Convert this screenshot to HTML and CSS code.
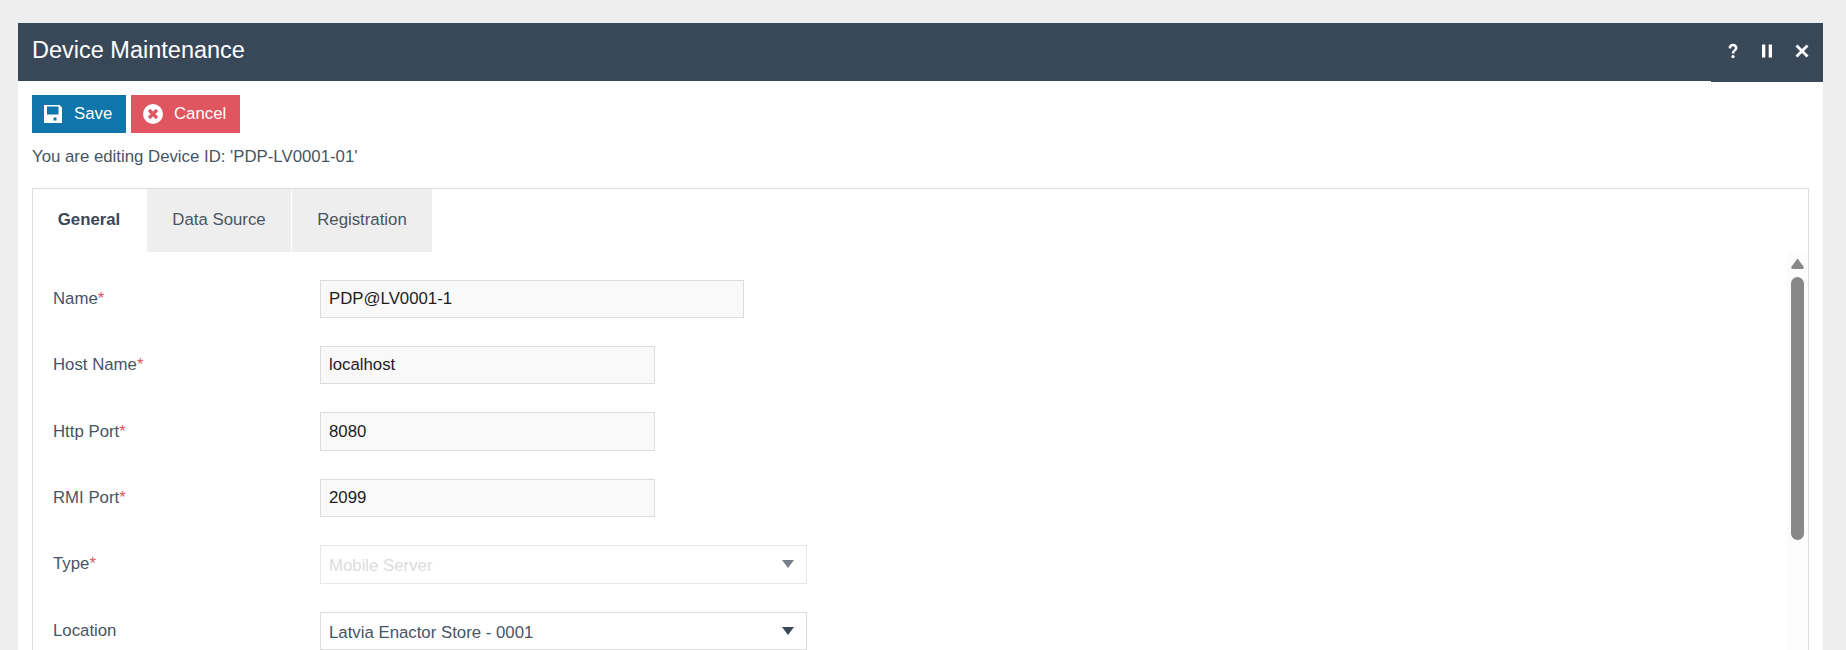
FILE: index.html
```html
<!DOCTYPE html>
<html lang="en">
<head>
<meta charset="utf-8">
<title>Device Maintenance</title>
<link rel="stylesheet" href="styles.css">
</head>
<body>
<main class="modal">
  <header class="modal-header">
    <h1 class="modal-title">Device Maintenance</h1>
    <div class="modal-actions">
      <svg class="action-icon" viewBox="0 0 14 16" width="14" height="16"><path d="M2.500 5.200C2.500 2.800 4.500 .8 7 .8s4.500 1.700 4.500 4c0 3.100-3 3-3 5.700H5.800c0-3.900 3-3.500 3-5.600 0-1-.8-1.700-1.800-1.700S5.200 4 5.100 5.400z" fill="#fff"/><circle cx="7" cy="13.600" r="1.700" fill="#fff"/></svg>
      <svg class="action-icon" viewBox="0 0 14 16" width="14" height="16"><rect x="2" y="1.500" width="3.300" height="13" fill="#fff"/><rect x="8.700" y="1.500" width="3.300" height="13" fill="#fff"/></svg>
      <svg class="action-icon" viewBox="0 0 14 16" width="14" height="16"><path d="M1.500 2.500 12.500 13.500M12.500 2.500 1.500 13.500" stroke="#fff" stroke-width="2.800" fill="none"/></svg>
    </div>
  </header>
  <div class="modal-body">
    <div class="toolbar">
      <button class="btn btn-save" type="button">
        <svg class="btn-icon" viewBox="0 0 18 18" width="18" height="18"><path fill-rule="evenodd" d="M0 0H15.500L18 2.500V18H0ZM3 1.500V9.500H14.500V1.500ZM9.500 12.500V15.500H12.500V12.500Z" fill="#fff"/></svg>
        <span>Save</span>
      </button>
      <button class="btn btn-cancel" type="button">
        <svg class="btn-icon" viewBox="0 0 20 20" width="20" height="20"><circle cx="10" cy="10" r="10" fill="#fff"/><path d="M6 6 14 14M14 6 6 14" stroke="#e0555f" stroke-width="3.200" fill="none"/></svg>
        <span>Cancel</span>
      </button>
    </div>
    <p class="edit-note">You are editing Device ID: 'PDP-LV0001-01'</p>
    <section class="panel">
      <nav class="tabs">
        <div class="tab tab-active">General</div>
        <div class="tab tab-data">Data Source</div>
        <div class="tab tab-reg">Registration</div>
      </nav>
      <div class="panel-content">
        <form class="form">
          <div class="row"><label class="label">Name<span class="req">*</span></label><div class="input input-wide">PDP@LV0001-1</div></div>
          <div class="row"><label class="label">Host Name<span class="req">*</span></label><div class="input input-mid">localhost</div></div>
          <div class="row"><label class="label">Http Port<span class="req">*</span></label><div class="input input-mid">8080</div></div>
          <div class="row"><label class="label">RMI Port<span class="req">*</span></label><div class="input input-mid">2099</div></div>
          <div class="row"><label class="label">Type<span class="req">*</span></label><div class="select select-disabled"><span class="select-text">Mobile Server</span><i class="caret"></i></div></div>
          <div class="row"><label class="label">Location</label><div class="select"><span class="select-text">Latvia Enactor Store - 0001</span><i class="caret"></i></div></div>
        </form>
        <div class="scrollbar">
          <svg class="scroll-up" viewBox="0 0 13 11" width="13" height="11"><path d="M6.500 0.500 12.800 9Q13 11 11.500 11H1.500Q0 11 .2 9Z" fill="#888"/></svg>
          <div class="scroll-thumb"></div>
        </div>
      </div>
    </section>
  </div>
</main>
</body>
</html>
```
FILE: styles.css
```css
* { box-sizing: border-box; }
html, body { height: 100%; }
body {
  margin: 0;
  height: 650px;
  overflow: hidden;
  background: #eeeeee;
  font-family: "Liberation Sans", Arial, sans-serif;
  font-size: 16.800px;
  color: #465565;
  padding: 23px 23px 0 18px;
}
.modal { background: #fff; height: 627px; overflow: hidden; }
.modal-header {
  height: 58px;
  background: #394858;
  display: flex;
  align-items: center;
  justify-content: space-between;
  padding-left: 14px;
  position: relative;
}
.modal-title { margin: 0; font-size: 23.500px; font-weight: 400; color: #fff; line-height: 1; position: relative; top: -1px; }
.modal-actions {
  position: absolute;
  right: 0;
  top: 0;
  width: 112px;
  height: 59px;
  background: #394858;
  display: flex;
  align-items: center;
  justify-content: flex-end;
  gap: 20.500px;
  padding: 0 14.500px 0 0;
}
.action-icon { display: block; margin-top: -3px; }
.modal-body { padding: 14px 14px 0; }
.toolbar { display: flex; gap: 5px; height: 38px; }
.btn {
  height: 38px;
  border: 0;
  padding: 0;
  color: #fff;
  font: inherit;
  display: flex;
  align-items: center;
}
.btn-save { width: 94px; background: #0f75ab; padding-left: 12px; gap: 12px; }
.btn-cancel { width: 109px; background: #e0555f; padding-left: 12px; gap: 11px; }
.btn-icon { display: block; flex: none; }
.edit-note { margin: 14px 0 0; line-height: 20px; height: 20px; }
.panel {
  margin-top: 21px;
  border: 1px solid #dddddd;
  height: 470px;
  width: 1777px;
}
.tabs { display: flex; height: 63px; }
.tab { display: flex; align-items: center; justify-content: center; background: #eeeeee; padding-bottom: 2px; }
.tab-active { width: 114px; background: #fff; font-weight: 700; color: #394858; padding-right: 2px; }
.tab-data { width: 144px; }
.tab-reg { width: 140px; margin-left: 1px; }
.panel-content { display: flex; justify-content: space-between; height: 400px; }
.form { padding: 27.600px 0 0 20px; display: flex; flex-direction: column; gap: 28px; }
.row { display: flex; align-items: center; height: 38.400px; }
.label { width: 267px; flex: none; }
.req { color: #e0555f; }
.input {
  height: 100%;
  background: #f9f9f9;
  border: 1px solid #dddddd;
  color: #1c1c1c;
  padding: 0 8px;
  display: flex;
  align-items: center;
}
.input-wide { width: 424px; }
.input-mid { width: 335px; }
.select {
  height: 100%;
  width: 487px;
  border: 1px solid #dddddd;
  background: #fff;
  color: #465565;
  padding: 0 9px 0 8px;
  display: flex;
  align-items: center;
  justify-content: space-between;
}
.select-text { position: relative; top: 2px; }
.select-disabled { color: #dcdcdc; border-color: #e8e8e8; }
.caret {
  width: 0;
  height: 0;
  margin-right: 3px;
  border-left: 6.500px solid transparent;
  border-right: 6.500px solid transparent;
  border-top: 8px solid #394858;
}
.select-disabled .caret { border-top-color: #75808c; }
.scrollbar {
  width: 21px;
  background: #fcfcfc;
  padding: 6px 4px 0;
  display: flex;
  flex-direction: column;
  gap: 8px;
  flex: none;
}
.scroll-up { display: block; flex: none; }
.scroll-thumb { width: 13px; height: 263px; background: #888; border-radius: 7px; }
```
